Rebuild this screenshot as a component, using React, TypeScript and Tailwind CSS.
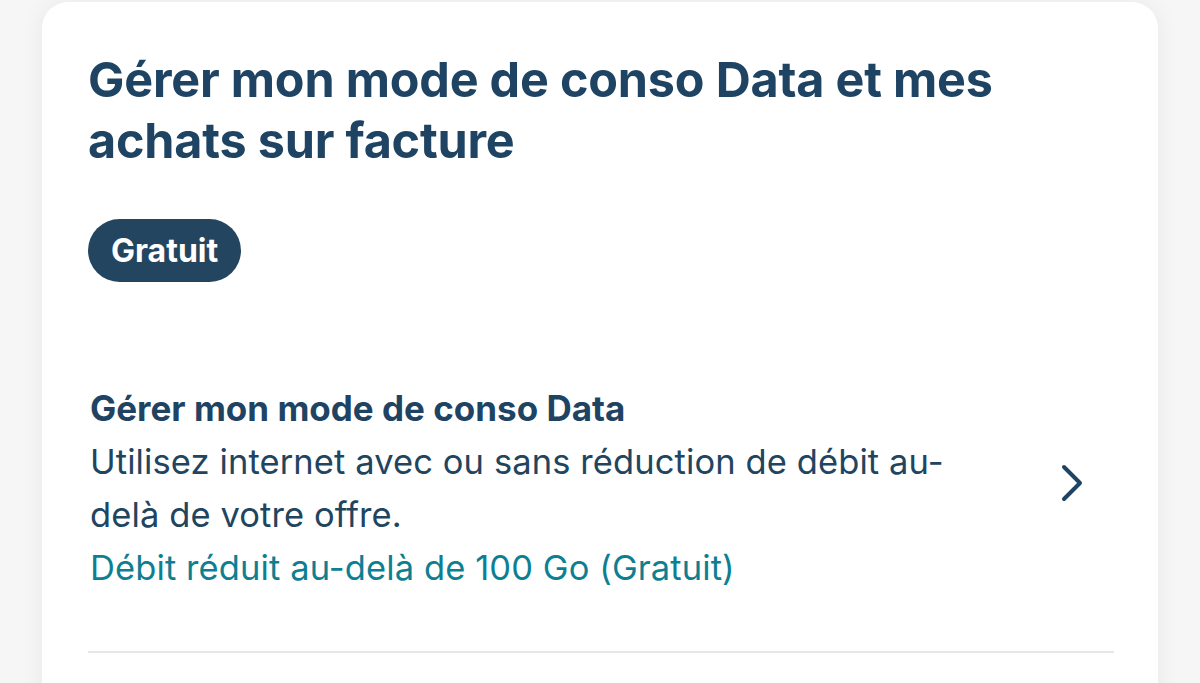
import { ChevronRight } from "lucide-react";

export default function App() {
  return (
    <div className="min-h-screen bg-[#f6f6f6] pt-[2px] px-[42px] font-['Inter',sans-serif] overflow-hidden">
      <div className="bg-white rounded-t-[26px] shadow-[0_0_24px_rgba(0,0,0,0.06)] pl-[46px] pr-[44px] pt-[47px] pb-[40px] min-h-[700px]">
        {/* Header */}
        <h1 className="text-[48.5px] leading-[61px] font-bold text-[#1f4463] tracking-[-0.2px]">
          Gérer mon mode de conso Data et mes
          <br />
          achats sur facture
        </h1>

        <span className="mt-[48px] inline-flex items-center h-[63px] px-[23px] rounded-full bg-[#23455f] text-white text-[32px] font-bold">
          Gratuit
        </span>

        {/* Option row */}
        <div className="mt-[106px] flex items-start">
          <div className="flex-1 pl-[2px]">
            <div className="text-[35px] leading-[40px] font-bold text-[#1f4463]">
              Gérer mon mode de conso Data
            </div>
            <p className="mt-[7px] w-[880px] text-[34.5px] leading-[53px] text-[#21445f] tracking-[0.1px]">
              Utilisez internet avec ou sans réduction de débit au-delà de votre offre.
            </p>
            <p className="text-[34.5px] leading-[53px] text-[#0e7f92] tracking-[0.1px]">
              Débit réduit au-delà de 100 Go (Gratuit)
            </p>
          </div>
          <ChevronRight className="w-[64px] h-[64px] text-[#1f4463] mr-[10px] mt-[63px]" strokeWidth={1.5} />
        </div>

        <div className="mt-[57px] h-[2px] bg-[#e6e6e6]" />
      </div>
    </div>
  );
}
